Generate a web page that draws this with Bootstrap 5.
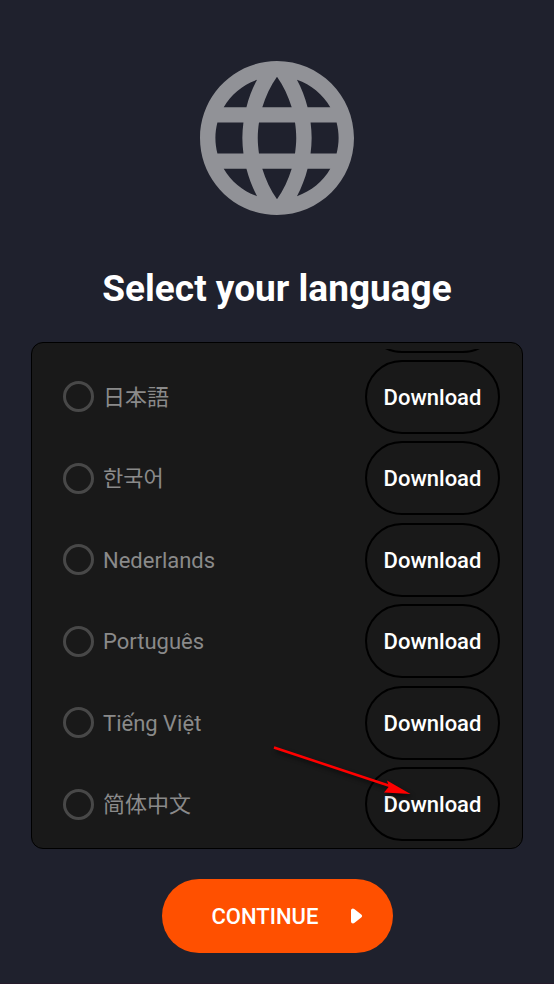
<!DOCTYPE html>
<html lang="en">
<head>
<meta charset="utf-8">
<meta name="viewport" content="width=device-width, initial-scale=1">
<title>Select your language</title>
<link href="https://cdn.jsdelivr.net/npm/bootstrap@5.3.0/dist/css/bootstrap.min.css" rel="stylesheet">
<style>
  body { background: #1f212d; color: #fff; font-family: Roboto, "Noto Sans CJK SC", sans-serif; }
  :lang(ja) { font-family: Roboto, "Noto Sans CJK JP", sans-serif; }
  :lang(ko) { font-family: Roboto, "Noto Sans CJK KR", sans-serif; }
  .screen { padding: 61px 31px 30px; border-bottom: 1px solid #241a2a; }
  .globe { width: 154px; height: 154px; fill: #919297; }
  .title { font-size: 37px; line-height: 48px; font-weight: 700; margin: 50px 0 29px; }
  .panel { background: #191919; border: 1px solid #000; border-radius: 12px; padding: 6px 22px 3px 31px; }
  .lang-row { flex: 1 0 81px; }
  .lang-row.scrolled { flex: 0 0 81px; margin-top: -81px; }
  .lang-list { padding-top: 7px; }
  .lang-option { gap: 9px; font-size: 22px; line-height: 32px; color: #8a8a8a; }
  .lang-option .form-check-input { width: 31px; height: 31px; margin: 0; background-color: transparent; border: 3px solid #484848; }
  .lang-option span, .btn-continue span { padding-top: 2px; }
  .btn-pill { height: 74px; border-radius: 37px; font-size: 22px; line-height: 32px; font-weight: 500; color: #fff; }
  .btn-pill:hover { color: #fff; }
  .btn-download { width: 135px; border: 2px solid #000; padding: 2px 0 0; }
  .btn-continue, .btn-continue:hover { width: 231px; margin-top: 30px; padding: 0 30px 0 50px; background: #ff5000; border: 0; }
  .pointer-arrow { right: 108px; bottom: 45px; width: 150px; height: 64px; pointer-events: none; filter: drop-shadow(2px 3px 2px rgba(0, 0, 0, .6)); }
</style>
</head>
<body>
<main class="screen min-vh-100 d-flex flex-column align-items-center">
  <svg class="globe flex-shrink-0" viewBox="2 2 20 20" aria-hidden="true"><path d="M11.99 2C6.47 2 2 6.48 2 12s4.47 10 9.99 10C17.52 22 22 17.52 22 12S17.52 2 11.99 2zm6.93 6h-2.95c-.32-1.25-.78-2.45-1.38-3.56 1.84.63 3.37 1.91 4.33 3.56zM12 4.04c.83 1.2 1.48 2.53 1.91 3.96h-3.82c.43-1.43 1.08-2.76 1.91-3.96zM4.26 14C4.1 13.36 4 12.69 4 12s.1-1.36.26-2h3.38c-.08.66-.14 1.32-.14 2s.06 1.34.14 2H4.26zm.82 2h2.95c.32 1.25.78 2.45 1.38 3.56-1.84-.63-3.37-1.9-4.33-3.56zm2.95-8H5.08c.96-1.66 2.49-2.93 4.33-3.56C8.81 5.55 8.35 6.75 8.03 8zM12 19.96c-.83-1.2-1.48-2.53-1.91-3.96h3.82c-.43 1.43-1.08 2.76-1.91 3.96zM14.34 14H9.66c-.09-.66-.16-1.32-.16-2s.07-1.35.16-2h4.68c.09.65.16 1.32.16 2s-.07 1.34-.16 2zm.25 5.56c.6-1.11 1.06-2.31 1.38-3.56h2.95c-.96 1.65-2.49 2.93-4.33 3.56zM16.36 14c.08-.66.14-1.32.14-2s-.06-1.34-.14-2h3.38c.16.64.26 1.31.26 2s-.1 1.36-.26 2h-3.38z"/></svg>
  <h1 class="title text-center">Select your language</h1>

  <section class="panel position-relative w-100 flex-grow-1 d-flex flex-column">
    <div class="lang-list flex-grow-1 d-flex flex-column overflow-hidden">
      <div class="lang-row scrolled d-flex align-items-center justify-content-end" aria-hidden="true">
        <button type="button" class="btn btn-pill btn-download" tabindex="-1"></button>
      </div>
      <div class="lang-row d-flex align-items-center justify-content-between">
        <label class="lang-option d-flex align-items-center" for="l-ja"><input class="form-check-input" type="radio" name="language" id="l-ja"><span lang="ja">日本語</span></label>
        <button type="button" class="btn btn-pill btn-download">Download</button>
      </div>
      <div class="lang-row d-flex align-items-center justify-content-between">
        <label class="lang-option d-flex align-items-center" for="l-ko"><input class="form-check-input" type="radio" name="language" id="l-ko"><span lang="ko">한국어</span></label>
        <button type="button" class="btn btn-pill btn-download">Download</button>
      </div>
      <div class="lang-row d-flex align-items-center justify-content-between">
        <label class="lang-option d-flex align-items-center" for="l-nl"><input class="form-check-input" type="radio" name="language" id="l-nl"><span lang="nl">Nederlands</span></label>
        <button type="button" class="btn btn-pill btn-download">Download</button>
      </div>
      <div class="lang-row d-flex align-items-center justify-content-between">
        <label class="lang-option d-flex align-items-center" for="l-pt"><input class="form-check-input" type="radio" name="language" id="l-pt"><span lang="pt">Português</span></label>
        <button type="button" class="btn btn-pill btn-download">Download</button>
      </div>
      <div class="lang-row d-flex align-items-center justify-content-between">
        <label class="lang-option d-flex align-items-center" for="l-vi"><input class="form-check-input" type="radio" name="language" id="l-vi"><span lang="vi">Tiếng Việt</span></label>
        <button type="button" class="btn btn-pill btn-download">Download</button>
      </div>
      <div class="lang-row d-flex align-items-center justify-content-between">
        <label class="lang-option d-flex align-items-center" for="l-zh"><input class="form-check-input" type="radio" name="language" id="l-zh"><span lang="zh-Hans">简体中文</span></label>
        <button type="button" class="btn btn-pill btn-download">Download</button>
      </div>
    </div>
    <svg class="pointer-arrow position-absolute" viewBox="0 0 150 64" aria-hidden="true">
      <path d="M10 8.500L126 47" stroke="#f00" stroke-width="2.500" fill="none"/>
      <path d="M123 41.500L146.500 55L120 53.500L125 47.500Z" fill="#f00"/>
    </svg>
  </section>

  <button type="button" class="btn btn-pill btn-continue flex-shrink-0 d-flex align-items-center justify-content-between">
    <span>CONTINUE</span>
    <svg width="12" height="16" viewBox="0 0 12 16" aria-hidden="true"><path d="M2 2.500V13.500L9 8Z" fill="#fff" stroke="#fff" stroke-width="4" stroke-linejoin="round"/></svg>
  </button>
</main>
<script src="https://cdn.jsdelivr.net/npm/bootstrap@5.3.0/dist/js/bootstrap.bundle.min.js"></script>
</body>
</html>
